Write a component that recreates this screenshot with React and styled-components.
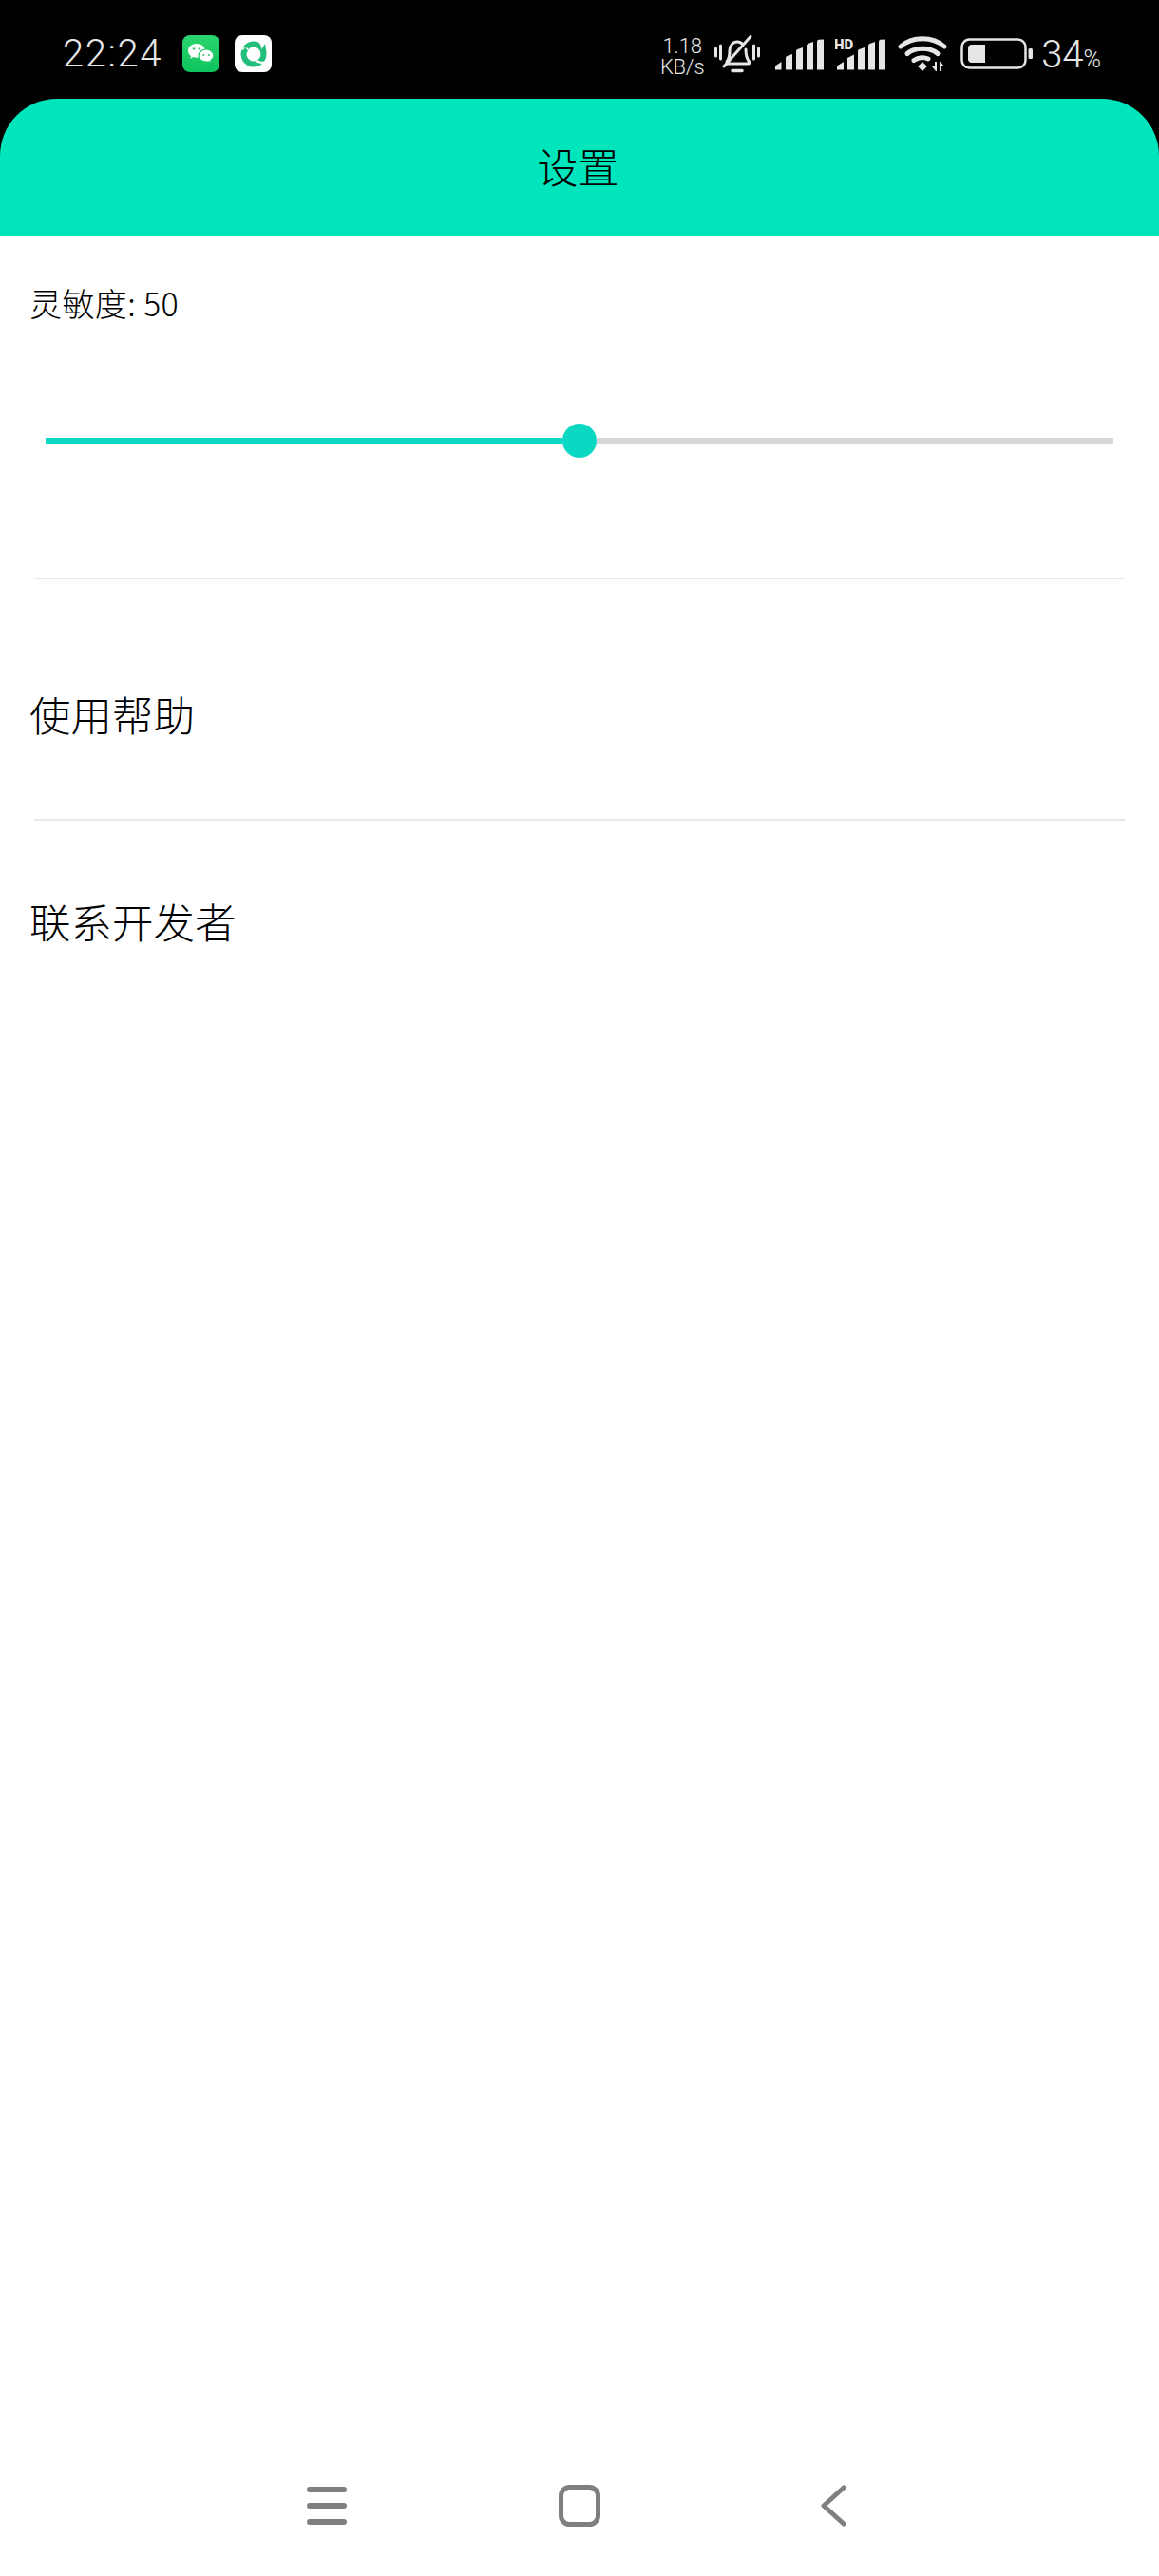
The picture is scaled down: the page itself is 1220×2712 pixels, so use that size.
import React from "react";
import styled, { createGlobalStyle } from "styled-components";

const Global = createGlobalStyle`
  html, body { margin: 0; padding: 0; background: #fff; }
  * { box-sizing: border-box; }
`;
const CJK = `"Noto Sans CJK SC", "Noto Sans", sans-serif`;
const Page = styled.div`
  width: 1220px; height: 2712px; background: #000; display: flex; flex-direction: column; overflow: hidden;
  font-family: ${CJK};
`;
const StatusBar = styled.div`
  height: 104px; flex: none; display: flex; align-items: flex-start; padding: 37px 0 0 66px; color: #e6e6e6;
  font-family: Roboto, sans-serif; font-weight: 300;
`;
const Time = styled.div`
  width: 126px; font-size: 40px; line-height: 39px; letter-spacing: 1.6px;
`;
const AppIcon = styled.svg`
  width: 39px; height: 39px; display: block; margin-right: ${p => p.$mr || 0}px;
`;
const Right = styled.div`
  margin-left: auto; display: flex; align-items: flex-start;
`;
const Speed = styled.div`
  width: 56px; display: flex; flex-direction: column; align-items: center; font-size: 22px; line-height: 22px; padding-top: 1px; letter-spacing: -.2px;
`;
const Glyph = styled.svg`
  display: block; width: ${p => p.$w}px; height: ${p => p.$h}px; margin-left: ${p => p.$ml || 0}px; margin-top: ${p => p.$mt || 0}px;
`;
const Pct = styled.div`
  margin-left: 9px; margin-right: 61px; font-size: 40px; line-height: 42px; display: flex; align-items: baseline; white-space: nowrap;
`;
const PctSign = styled.span`
  font-size: 25px;
`;
const Screen = styled.div`
  flex: 1; display: flex; flex-direction: column; background: #000;
`;
const Header = styled.header`
  height: 144px; flex: none; background: #00e5bc; border-radius: 60px 60px 0 0; display: flex; align-items: center; justify-content: center;
  padding: 0 3px 4px 0; font-size: 43px; font-weight: 300; color: #000;
`;
const Content = styled.main`
  flex: 1; display: flex; flex-direction: column; background: #fff;
`;
const Sensitivity = styled.section`
  display: flex; flex-direction: column; padding: 49px 36px 0 31px; height: 360px; flex: none;
`;
const Label = styled.div`
  font-size: 34px; line-height: 44px; color: #000; font-weight: 300; letter-spacing: .4px;
`;
const Slider = styled.div`
  display: flex; align-items: center; height: 36px; margin: 105px 12px 0 17px;
`;
const Track = styled.div`
  flex: 1; height: 6px; background: ${p => p.$on ? "#0bd8c2" : "#d6d6d6"};
`;
const Thumb = styled.div`
  width: 36px; height: 36px; border-radius: 50%; background: #0bd8c2; flex: none;
`;
const Divider = styled.hr`
  margin: 0 36px; height: 2px; border: 0; background: #e8e8e8; flex: none;
`;
const Row = styled.div`
  height: ${p => p.$h}px; flex: none; padding: ${p => p.$pt}px 31px 0; font-size: 43.5px; line-height: 60px; color: #000; font-weight: 300;
`;
const Spacer = styled.div`
  flex: 1;
`;
const Nav = styled.nav`
  height: 96px; flex: none; display: flex; align-items: flex-start; padding-left: 323px;
`;
const NavIcon = styled.svg`
  display: block; width: ${p => p.$w}px; height: 44px; margin-right: ${p => p.$mr || 0}px;
`;

export default function App() {
  return (
    <Page>
      <Global />
      <StatusBar>
        <Time>22:24</Time>
        <AppIcon viewBox="0 0 39 39" $mr={16}>
          <defs>
            <linearGradient id="wg" x1="0" y1="0" x2="0" y2="1">
              <stop offset="0" stopColor="#2bd46f" />
              <stop offset="1" stopColor="#0ec45c" />
            </linearGradient>
          </defs>
          <rect width="39" height="39" rx="8" fill="url(#wg)" />
          <path d="M15 9c-5 0-9 3.400-9 7.500 0 2.300 1.200 4.200 3 5.500l-.7 2.800 3.200-1.700c1.100.4 2.300.6 3.500.6 5 0 9-3.200 9-7.200S20 9 15 9z" fill="#fff" />
          <path d="M25 15c-4.400 0-8 2.900-8 6.600s3.600 6.600 8 6.600c1 0 1.900-.2 2.800-.4l2.500 1.500-.6-2.500c2-1.200 3.300-3 3.300-5.200 0-3.700-3.600-6.600-8-6.600z" fill="#fff" stroke="#1bcb68" strokeWidth="1.200" />
          <circle cx="12" cy="14.500" r="1.300" fill="#3bc77a" />
          <circle cx="18" cy="14.500" r="1.300" fill="#3bc77a" />
          <circle cx="22.300" cy="21" r="1.100" fill="#3bc77a" />
          <circle cx="28" cy="21" r="1.100" fill="#3bc77a" />
        </AppIcon>
        <AppIcon viewBox="0 0 39 39">
          <rect width="39" height="39" rx="8" fill="#fff" />
          <circle cx="20" cy="20" r="10.500" fill="none" stroke="#22bf7c" strokeWidth="6" />
          <path d="M6 15.500C8 14 11 13.800 14 15M25 5.500C28 8 29.500 11 29.500 15M31 29C27 29 23.500 28 21 25.500" fill="none" stroke="#fff" strokeWidth="2.400" />
          <path d="M17 34l-2.500-7.500 6 3.500zM8 20l3-8 3 5.500zM32 9l1.500 9-5-3z" fill="#22bf7c" />
        </AppIcon>
        <Right>
          <Speed><span>1.18</span><span>KB/s</span></Speed>
          <Glyph $w={48} $h={42} $ml={6} viewBox="0 0 48 42" fill="none" stroke="#e6e6e6" strokeWidth="3" strokeLinecap="round" strokeLinejoin="round">
            <path d="M1.500 14v8M6.500 11v14M41.500 11v14M46.500 14v8" />
            <path d="M13 28c3-4 3-7 3-12 0-5 3.500-9 8-9 2 0 3.800.7 5.300 2M33 15c0 6 .5 9 3.500 13 .8 1.200 0 2-1 2H12.500" />
            <path d="M19 37.500h10" strokeWidth="3.500" />
            <path d="M38 1.500 10 33" />
          </Glyph>
          <Glyph $w={52} $h={33} $ml={15} $mt={4} viewBox="0 0 52 33" fill="#e6e6e6">
            <path d="M1 32.500V28.500L7.500 24V32.500ZM12 32.500V20Q12 18.500 13.500 18L19 16V32.500ZM23 32.500V13Q23 11.500 24.500 11L30 9V32.500ZM34 32.500V7Q34 5.500 35.500 5L41 3V32.500ZM45 32.500V3Q45 1 46.500 .8L52 .5V32.500Z" />
          </Glyph>
          <Glyph $w={53} $h={37} $ml={12} viewBox="0 0 53 37" fill="#e6e6e6">
            <text x="-1" y="15" fontFamily="Roboto, sans-serif" fontWeight="900" fontSize="15" fill="#e6e6e6">HD</text>
            <path d="M2 36.500V32.500L9 28V36.500ZM13 36.500V24L20 20.500V36.500ZM24 36.500V17Q24 15.500 25.500 15L31 13V36.500ZM35 36.500V11Q35 9.500 36.500 9L42 7V36.500ZM46 36.500V7Q46 5 47.500 4.800L53 4.500V36.500Z" />
          </Glyph>
          <Glyph $w={52} $h={40} $ml={13} viewBox="0 0 52 40" fill="none" stroke="#e6e6e6" strokeWidth="5" strokeLinecap="round">
            <path d="M3 12C15 1 37 1 49 12" />
            <path d="M10 19.500C18 12.500 34 12.500 42 19.500" />
            <path d="M17 26.500C22 23 28 23 32 25" />
            <path d="M26 29.500l-3.500 3.500 3.500 3.500 3.500-3.500z" fill="#e6e6e6" strokeWidth="2" />
            <path d="M41 28v10h-1l-4-5h3v-5zM44 38V28h1l4 5h-3v5z" fill="#e6e6e6" stroke="none" />
          </Glyph>
          <Glyph $w={76} $h={33} $ml={14} $mt={3} viewBox="0 0 76 33">
            <rect x="1.500" y="1.500" width="67" height="30" rx="8" fill="none" stroke="#e6e6e6" strokeWidth="2.500" />
            <path d="M11 7h15v19H11a4 4 0 0 1-3-3V10a4 4 0 0 1 3-3z" fill="#e6e6e6" />
            <rect x="71.500" y="11" width="4.500" height="11" rx="1.500" fill="#e6e6e6" />
          </Glyph>
          <Pct>34<PctSign>%</PctSign></Pct>
        </Right>
      </StatusBar>
      <Screen>
        <Header>设置</Header>
        <Content>
          <Sensitivity>
            <Label>灵敏度: 50</Label>
            <Slider>
              <Track $on />
              <Thumb />
              <Track />
            </Slider>
          </Sensitivity>
          <Divider />
          <Row $h={252} $pt={112}>使用帮助</Row>
          <Divider />
          <Row $h={140} $pt={76}>联系开发者</Row>
          <Spacer />
          <Nav>
            <NavIcon $w={42} $mr={223} viewBox="0 0 42 44" fill="none" stroke="#7f7f7f" strokeWidth="6" strokeLinecap="round">
              <path d="M3 5h36M3 22h36M3 39h36" />
            </NavIcon>
            <NavIcon $w={44} $mr={231} viewBox="0 0 44 44" fill="none" stroke="#7f7f7f" strokeWidth="5">
              <rect x="2.500" y="2.500" width="39" height="39" rx="9" />
            </NavIcon>
            <NavIcon $w={28} viewBox="0 0 28 44" fill="none" stroke="#7f7f7f" strokeWidth="5" strokeLinecap="round" strokeLinejoin="round">
              <path d="M25 3 4 22l21 19" />
            </NavIcon>
          </Nav>
        </Content>
      </Screen>
    </Page>
  );
}
